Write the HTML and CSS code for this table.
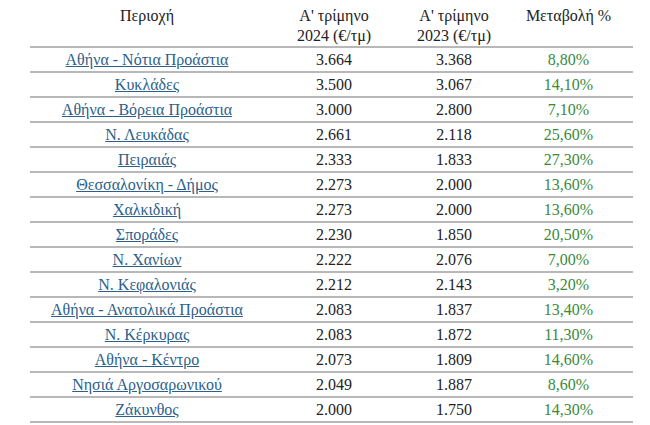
FILE: index.html
```html
<!DOCTYPE html>
<html lang="el">
<head>
<meta charset="utf-8">
<link rel="stylesheet" href="styles.css">
</head>
<body>
<table class="prices">
  <colgroup>
    <col class="c-area"><col class="c-y24"><col class="c-y23"><col class="c-chg">
  </colgroup>
  <thead>
    <tr>
      <th>Περιοχή</th>
      <th>Α' τρίμηνο<br>2024 (€/τμ)</th>
      <th>Α' τρίμηνο<br>2023 (€/τμ)</th>
      <th>Μεταβολή %</th>
    </tr>
  </thead>
  <tbody>
    <tr><td><a href="#">Αθήνα - Νότια Προάστια</a></td><td>3.664</td><td>3.368</td><td class="chg">8,80%</td></tr>
    <tr><td><a href="#">Κυκλάδες</a></td><td>3.500</td><td>3.067</td><td class="chg">14,10%</td></tr>
    <tr><td><a href="#">Αθήνα - Βόρεια Προάστια</a></td><td>3.000</td><td>2.800</td><td class="chg">7,10%</td></tr>
    <tr><td><a href="#">Ν. Λευκάδας</a></td><td>2.661</td><td>2.118</td><td class="chg">25,60%</td></tr>
    <tr><td><a href="#">Πειραιάς</a></td><td>2.333</td><td>1.833</td><td class="chg">27,30%</td></tr>
    <tr><td><a href="#">Θεσσαλονίκη - Δήμος</a></td><td>2.273</td><td>2.000</td><td class="chg">13,60%</td></tr>
    <tr><td><a href="#">Χαλκιδική</a></td><td>2.273</td><td>2.000</td><td class="chg">13,60%</td></tr>
    <tr><td><a href="#">Σποράδες</a></td><td>2.230</td><td>1.850</td><td class="chg">20,50%</td></tr>
    <tr><td><a href="#">Ν. Χανίων</a></td><td>2.222</td><td>2.076</td><td class="chg">7,00%</td></tr>
    <tr><td><a href="#">Ν. Κεφαλονιάς</a></td><td>2.212</td><td>2.143</td><td class="chg">3,20%</td></tr>
    <tr><td><a href="#">Αθήνα - Ανατολικά Προάστια</a></td><td>2.083</td><td>1.837</td><td class="chg">13,40%</td></tr>
    <tr><td><a href="#">Ν. Κέρκυρας</a></td><td>2.083</td><td>1.872</td><td class="chg">11,30%</td></tr>
    <tr><td><a href="#">Αθήνα - Κέντρο</a></td><td>2.073</td><td>1.809</td><td class="chg">14,60%</td></tr>
    <tr><td><a href="#">Νησιά Αργοσαρωνικού</a></td><td>2.049</td><td>1.887</td><td class="chg">8,60%</td></tr>
    <tr><td><a href="#">Ζάκυνθος</a></td><td>2.000</td><td>1.750</td><td class="chg">14,30%</td></tr>
  </tbody>
</table>
</body>
</html>
```
FILE: styles.css
```css
html, body {
  margin: 0;
  padding: 0;
  background: #ffffff;
}
body {
  font-family: "Liberation Serif", "Times New Roman", serif;
  font-size: 16px;
  color: #222222;
}
.prices {
  margin-left: 30px;
  width: 603px;
  border-collapse: collapse;
  table-layout: fixed;
}
.c-area { width: 234px; }
.c-y24 { width: 140px; }
.c-y23 { width: 100px; }
.c-chg { width: 129px; }
.prices th {
  font-weight: normal;
  text-align: center;
  vertical-align: top;
  line-height: 20px;
  padding: 6px 0 0;
  height: 40px;
  border-bottom: 2px solid #b8b8b8;
}
.prices td {
  text-align: center;
  line-height: 19px;
  padding: 2px 0 2px;
  border-bottom: 2px solid #b8b8b8;
}
.prices a {
  color: #2c5f8c;
  text-decoration: underline;
}
.prices .chg {
  color: #3a8a3a;
}
```
